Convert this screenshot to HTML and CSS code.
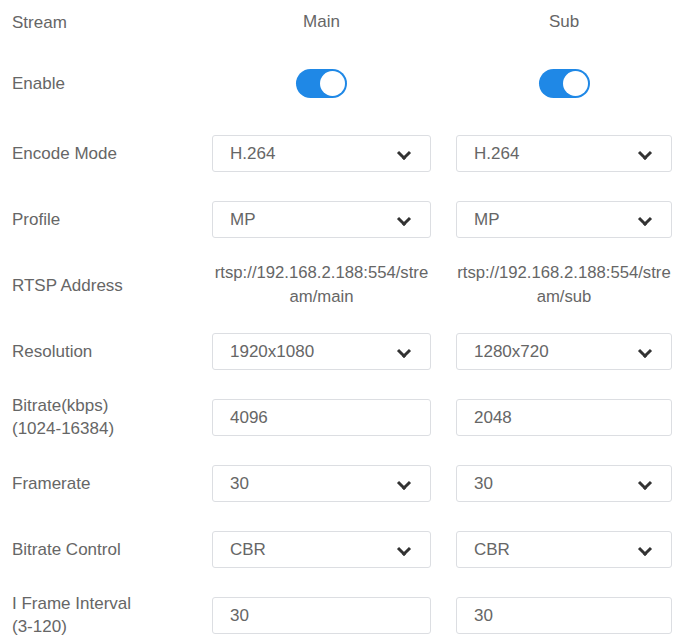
FILE: index.html
```html
<!DOCTYPE HTML>
<html>
<head>
    <title>Stream Settings</title>
    <meta name="viewport" content="width=device-width, initial-scale=1">
    <meta http-equiv="content-type" content="text/html; charset=utf-8">
    <link rel="stylesheet" href="styles.css">
</head>
<body>
    <div class="form">

      <div class="row row-head">
        <div class="label">Stream</div>
        <div class="cell center">Main</div>
        <div class="cell center">Sub</div>
      </div>

      <div class="row row-enable">
        <div class="label">Enable</div>
        <div class="cell center"><span class="switch on"></span></div>
        <div class="cell center"><span class="switch on"></span></div>
      </div>

      <div class="row">
        <div class="label">Encode Mode</div>
        <div class="cell"><div class="select">H.264</div></div>
        <div class="cell"><div class="select">H.264</div></div>
      </div>

      <div class="row">
        <div class="label">Profile</div>
        <div class="cell"><div class="select">MP</div></div>
        <div class="cell"><div class="select">MP</div></div>
      </div>

      <div class="row">
        <div class="label">RTSP Address</div>
        <div class="cell url">rtsp://192.168.2.188:554/stream/main</div>
        <div class="cell url">rtsp://192.168.2.188:554/stream/sub</div>
      </div>

      <div class="row">
        <div class="label">Resolution</div>
        <div class="cell"><div class="select">1920x1080</div></div>
        <div class="cell"><div class="select">1280x720</div></div>
      </div>

      <div class="row">
        <div class="label">Bitrate(kbps) <span class="range">(1024-16384)</span></div>
        <div class="cell"><div class="input">4096</div></div>
        <div class="cell"><div class="input">2048</div></div>
      </div>

      <div class="row">
        <div class="label">Framerate</div>
        <div class="cell"><div class="select">30</div></div>
        <div class="cell"><div class="select">30</div></div>
      </div>

      <div class="row">
        <div class="label">Bitrate Control</div>
        <div class="cell"><div class="select">CBR</div></div>
        <div class="cell"><div class="select">CBR</div></div>
      </div>

      <div class="row">
        <div class="label">I Frame Interval <span class="range">(3-120)</span></div>
        <div class="cell"><div class="input">30</div></div>
        <div class="cell"><div class="input">30</div></div>
      </div>

    </div>
</body>
</html>
```

FILE: styles.css
```css
* {box-sizing: border-box;}

body {
  margin: 0;
  background: #fff;
  font-family: "Liberation Sans", Arial, Helvetica, sans-serif;
  font-size: 17px;
  color: #666;
}

.form {
  padding: 3px 10px 0 12px;
}

.row {
  display: grid;
  grid-template-columns: 175px 219px 216px;
  grid-template-rows: 38px;
  column-gap: 25px;
  align-items: center;
  margin-bottom: 28px;
}

.row-head {
  margin-bottom: 23px;
}

.row-enable {
  margin-bottom: 32px;
}

.label {
  padding-right: 30px;
  line-height: 23px;
}

.range {
  white-space: nowrap;
}

.cell.center {
  display: flex;
  justify-content: center;
}

.url {
  text-align: center;
  word-break: break-all;
  font-size: 16.7px;
  line-height: 24px;
}

.switch {
  display: inline-block;
  position: relative;
  width: 51px;
  height: 29px;
  border-radius: 15px;
  background-color: #1f88e6;
}

.switch::after {
  content: "";
  position: absolute;
  top: 2px;
  right: 2px;
  width: 25px;
  height: 25px;
  border-radius: 50%;
  background-color: #fff;
}

.select,
.input {
  position: relative;
  height: 37px;
  line-height: 35px;
  border: 1px solid #dcdee2;
  border-radius: 3px;
  padding-left: 17px;
  color: #666;
}

.select::after {
  content: "";
  position: absolute;
  right: 21px;
  top: 12px;
  width: 7px;
  height: 7px;
  border-right: 3px solid #333;
  border-bottom: 3px solid #333;
  transform: rotate(45deg);
}
```
